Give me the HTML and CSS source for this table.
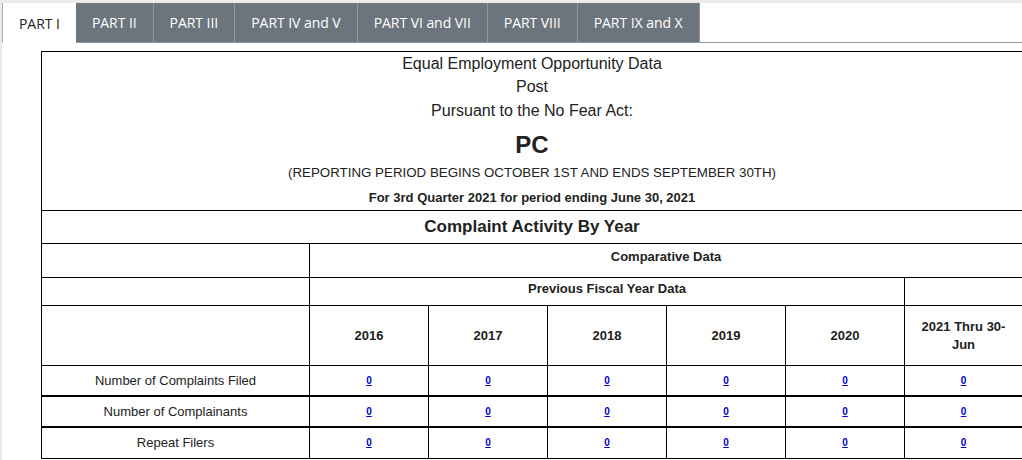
FILE: index.html
```html
<!DOCTYPE html>
<html lang="en">
<head>
<meta charset="utf-8">
<title>No Fear Act Data</title>
<link rel="stylesheet" href="styles.css">
</head>
<body>
<div class="page">
  <nav class="tabs">
    <a class="tab active">PART I</a>
    <a class="tab">PART II</a>
    <a class="tab">PART III</a>
    <a class="tab">PART IV and V</a>
    <a class="tab">PART VI and VII</a>
    <a class="tab">PART VIII</a>
    <a class="tab">PART IX and X</a>
  </nav>
  <div class="content">
    <table class="report">
      <colgroup>
        <col class="c-label">
        <col class="c-year"><col class="c-year"><col class="c-year"><col class="c-year"><col class="c-year">
        <col class="c-last">
      </colgroup>
      <tr class="r-head">
        <td colspan="7" class="head">
          <div class="h1">Equal Employment Opportunity Data</div>
          <div class="h2">Post</div>
          <div class="h3">Pursuant to the No Fear Act:</div>
          <div class="pc">PC</div>
          <div class="period">(REPORTING PERIOD BEGINS OCTOBER 1ST AND ENDS SEPTEMBER 30TH)</div>
          <div class="quarter">For 3rd Quarter 2021 for period ending June 30, 2021</div>
        </td>
      </tr>
      <tr class="r-title">
        <td colspan="7" class="title">Complaint Activity By Year</td>
      </tr>
      <tr class="r-comp">
        <td></td>
        <td colspan="6" class="sub">Comparative Data</td>
      </tr>
      <tr class="r-prev">
        <td></td>
        <td colspan="5" class="sub">Previous Fiscal Year Data</td>
        <td></td>
      </tr>
      <tr class="r-years">
        <td></td>
        <td class="year">2016</td>
        <td class="year">2017</td>
        <td class="year">2018</td>
        <td class="year">2019</td>
        <td class="year">2020</td>
        <td class="year last">2021 Thru 30-Jun</td>
      </tr>
      <tr class="r-data thick">
        <td class="label">Number of Complaints Filed</td>
        <td class="val"><a href="#">0</a></td>
        <td class="val"><a href="#">0</a></td>
        <td class="val"><a href="#">0</a></td>
        <td class="val"><a href="#">0</a></td>
        <td class="val"><a href="#">0</a></td>
        <td class="val"><a href="#">0</a></td>
      </tr>
      <tr class="r-data thick">
        <td class="label">Number of Complainants</td>
        <td class="val"><a href="#">0</a></td>
        <td class="val"><a href="#">0</a></td>
        <td class="val"><a href="#">0</a></td>
        <td class="val"><a href="#">0</a></td>
        <td class="val"><a href="#">0</a></td>
        <td class="val"><a href="#">0</a></td>
      </tr>
      <tr class="r-data">
        <td class="label">Repeat Filers</td>
        <td class="val"><a href="#">0</a></td>
        <td class="val"><a href="#">0</a></td>
        <td class="val"><a href="#">0</a></td>
        <td class="val"><a href="#">0</a></td>
        <td class="val"><a href="#">0</a></td>
        <td class="val"><a href="#">0</a></td>
      </tr>
    </table>
  </div>
</div>
</body>
</html>
```

FILE: styles.css
```css
html, body {
  margin: 0;
  padding: 0;
}

body {
  background: #ebebeb;
  overflow: hidden;
}

.page {
  margin: 3px 0 0 2px;
  background: #fff;
  min-height: 457px;
}

.tabs {
  display: flex;
  height: 39px;
  border-bottom: 1px solid #8f979f;
}

.tab {
  display: flex;
  align-items: center;
  padding: 0 16px;
  background: #6c757d;
  color: #fff;
  font-family: "Open Sans", sans-serif;
  font-size: 14px;
  letter-spacing: -0.05px;
  border-right: 1px solid #8f979f;
  text-decoration: none;
  white-space: nowrap;
}

.tab.active {
  background: #fff;
  color: #222;
  border-left: 1px solid #a9aeb3;
  border-right: none;
  height: 40px;
  padding: 0 16px 0 16px;
}

.content {
  padding: 8px 0 0 39px;
}

.report {
  width: 981px;
  table-layout: fixed;
  border-collapse: separate;
  border-spacing: 0;
  border-left: 1px solid #000;
  border-top: 1px solid #000;
  font-family: "Liberation Sans", Arial, sans-serif;
  color: #222;
}

.c-label { width: 268px; }
.c-year { width: 119px; }
.c-last { width: 118px; }

.report td {
  box-sizing: border-box;
  border-right: 1px solid #000;
  border-bottom: 1px solid #000;
  padding: 0;
  text-align: center;
  vertical-align: middle;
}

.r-head td { height: 159px; vertical-align: top; }
.r-title td { height: 33px; }
.r-comp td { height: 34px; }
.r-prev td { height: 28px; }
.r-years td { height: 60px; }
.r-data td { height: 31px; }
.r-data.thick td { border-bottom-width: 2px; }

.head .h1,
.head .h2 {
  font-size: 16px;
  line-height: 23px;
}

.head .h3 {
  font-size: 16px;
  line-height: 24px;
  padding-top: 1px;
}

.head .pc {
  font-size: 24px;
  font-weight: bold;
  line-height: 43px;
}

.head .period {
  font-size: 13.33px;
  line-height: 14px;
}

.head .quarter {
  font-size: 13px;
  font-weight: bold;
  line-height: 18px;
  margin-top: 9px;
}

.title {
  font-size: 17px;
  font-weight: bold;
  line-height: 18px;
  padding-bottom: 3px;
}

.sub {
  font-size: 13px;
  font-weight: bold;
  line-height: 16px;
}

.r-comp .sub {
  vertical-align: top;
  padding-top: 5px;
}

.r-prev .sub {
  vertical-align: top;
  padding-top: 3px;
}

.year {
  font-size: 13px;
  font-weight: bold;
  line-height: 18px;
}

.year.last {
  padding: 0 15px;
}

.label {
  font-size: 13px;
  line-height: 16px;
}

.val {
  font-size: 10px;
  font-weight: bold;
  line-height: 12px;
}

.val a {
  color: #0000cc;
  text-decoration: underline;
}
```
